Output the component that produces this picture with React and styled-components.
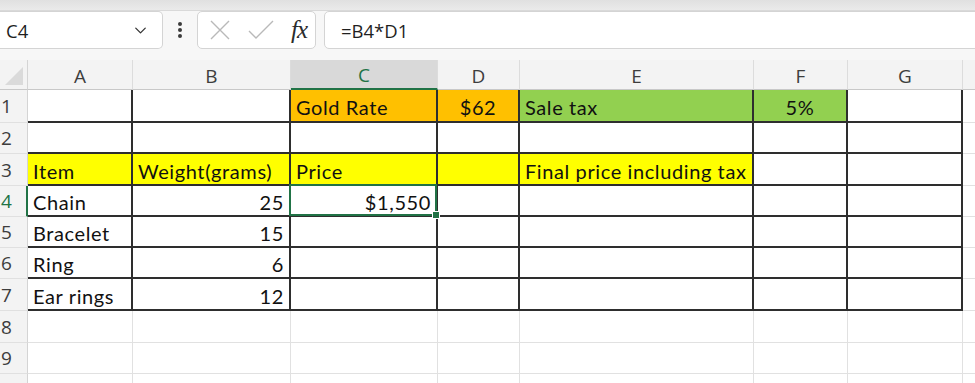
import React from "react";
import styled, { createGlobalStyle, css } from "styled-components";
import { ChevronDown } from "lucide-react";

const GlobalStyle = createGlobalStyle`
  html, body {
    margin: 0;
    padding: 0;
    background: #ffffff;
    overflow: hidden;
  }
  body {
    font-family: "Open Sans", "Noto Sans", sans-serif;
  }
`;

const GREEN = "#217346";
const DARK = "#2e2e2e";
const LIGHT = "#e1e1e1";

const COLS = ["A", "B", "C", "D", "E", "F", "G"];
const COL_WIDTHS = [28, 105, 158, 147, 82, 234, 94, 115, 20];
const ROW_HEIGHTS = [33, 31, 32, 31, 31, 31, 32, 32, 31, 31];

const YELLOW = "#ffff00";
const ORANGE = "#ffc000";
const LIME = "#92d050";

const data = {
  1: {
    C: { v: "Gold Rate", bg: ORANGE },
    D: { v: "$62", bg: ORANGE, align: "center" },
    E: { v: "Sale tax", bg: LIME },
    F: { v: "5%", bg: LIME, align: "center" },
  },
  3: {
    A: { v: "Item", bg: YELLOW },
    B: { v: "Weight(grams)", bg: YELLOW },
    C: { v: "Price", bg: YELLOW },
    D: { v: "", bg: YELLOW },
    E: { v: "Final price including tax", bg: YELLOW },
  },
  4: {
    A: { v: "Chain" },
    B: { v: "25", align: "right" },
    C: { v: "$1,550", align: "right", selected: true },
  },
  5: { A: { v: "Bracelet" }, B: { v: "15", align: "right" } },
  6: { A: { v: "Ring" }, B: { v: "6", align: "right" } },
  7: { A: { v: "Ear rings" }, B: { v: "12", align: "right" } },
};

const Window = styled.div`
  width: 975px;
  height: 383px;
  display: flex;
  flex-direction: column;
  background: #f3f3f3;
  overflow: hidden;
  & > * {
    flex-shrink: 0;
  }
`;

const TopStrip = styled.div`
  height: 10px;
  background: linear-gradient(#e0e0e0, #eaeaea);
  border-bottom: 1px solid #d9d9d9;
`;

const Toolbar = styled.div`
  height: 38px;
  display: flex;
  align-items: stretch;
  background: #f7f7f7;
  padding-bottom: 11px;
`;

const Box = styled.div`
  background: #ffffff;
  border: 1px solid #d4d4d4;
  border-radius: 5px;
  display: flex;
  align-items: center;
  box-sizing: border-box;
`;

const NameBox = styled(Box)`
  width: 163px;
  border-left: none;
  border-top-left-radius: 0;
  border-bottom-left-radius: 0;
  padding: 0 12px 0 6px;
  justify-content: space-between;
  font-size: 18.5px;
  color: #1f1f1f;
`;

const Grip = styled.div`
  width: 34px;
  display: flex;
  align-items: center;
  justify-content: center;
`;

const ActionBox = styled(Box)`
  width: 119px;
  padding: 0 8px 0 10px;
  justify-content: space-between;
`;

const Fx = styled.span`
  font-family: "Liberation Serif", "DejaVu Serif", serif;
  font-style: italic;
  font-size: 25px;
  color: #2b2b2b;
  letter-spacing: -1px;
  padding-bottom: 1px;
`;

const FormulaBox = styled(Box)`
  flex: 1;
  margin-left: 8px;
  margin-right: -8px;
  padding-left: 16px;
  font-size: 18.5px;
  color: #1f1f1f;
`;

const Sheet = styled.div`
  display: grid;
  grid-template-columns: ${COL_WIDTHS.map((w) => `${w}px`).join(" ")};
  grid-template-rows: 30px ${ROW_HEIGHTS.map((h) => `${h}px`).join(" ")};
  background: #ffffff;
`;

const Corner = styled.div`
  background: #f3f3f3;
  border-right: 1px solid #d4d4d4;
  border-bottom: 1px solid #c8c8c8;
  position: relative;
  box-sizing: border-box;
  &::after {
    content: "";
    position: absolute;
    right: 4px;
    bottom: 4px;
    width: 0;
    height: 0;
    border-left: 18px solid transparent;
    border-bottom: 18px solid #dadada;
  }
`;

const ColHead = styled.div`
  box-sizing: border-box;
  background: ${(p) => (p.$active ? "#d9d9d9" : "#f3f3f3")};
  color: ${(p) => (p.$active ? GREEN : "#3d3d3d")};
  border-right: 1px solid #dcdcdc;
  border-bottom: ${(p) => (p.$active ? `2px solid ${GREEN}` : "1px solid #c8c8c8")};
  display: flex;
  align-items: center;
  justify-content: center;
  font-size: 19px;
  padding-top: 2px;
`;

const RowHead = styled.div`
  box-sizing: border-box;
  background: #f3f3f3;
  color: ${(p) => (p.$active ? GREEN : "#3d3d3d")};
  border-right: ${(p) => (p.$active ? `2px solid ${GREEN}` : "1px solid #d4d4d4")};
  border-bottom: 1px solid #e0e0e0;
  display: flex;
  align-items: center;
  padding-left: 1px;
  font-size: 19px;
`;

const Cell = styled.div`
  box-sizing: border-box;
  position: relative;
  background: ${(p) => p.$bg || "#ffffff"};
  display: flex;
  align-items: center;
  justify-content: ${(p) =>
    p.$align === "right" ? "flex-end" : p.$align === "center" ? "center" : "flex-start"};
  padding: 3px 5px 0 5px;
  font-family: Lato, "Noto Sans", sans-serif;
  font-size: 20px;
  letter-spacing: 0.6px;
  color: #111111;
  white-space: nowrap;
  overflow: visible;
  ${(p) =>
    p.$boxed
      ? css`
          border-right: 2px solid ${DARK};
          border-bottom: 2px solid ${DARK};
        `
      : css`
          border-right: 1px solid ${LIGHT};
          border-bottom: 1px solid ${LIGHT};
        `}
  ${(p) =>
    p.$selected &&
    css`
      &::after {
        content: "";
        position: absolute;
        top: -2px;
        left: -2px;
        right: -1px;
        bottom: -1px;
        border: 2px solid ${GREEN};
        pointer-events: none;
      }
      &::before {
        content: "";
        position: absolute;
        right: -4px;
        bottom: -4px;
        width: 6px;
        height: 6px;
        background: ${GREEN};
        border: 1px solid #ffffff;
        z-index: 2;
      }
    `}
`;

const CrossIcon = () => (
  <svg width="24" height="24" viewBox="0 0 24 24">
    <path d="M3 3 L21 21 M21 3 L3 21" stroke="#b9b9b9" strokeWidth="1.4" fill="none" />
  </svg>
);

const CheckIcon = () => (
  <svg width="28" height="24" viewBox="0 0 28 24">
    <path d="M2 13 L9 20 L26 3" stroke="#b9b9b9" strokeWidth="1.4" fill="none" />
  </svg>
);

const DotsIcon = () => (
  <svg width="6" height="18" viewBox="0 0 6 18">
    <circle cx="3" cy="3" r="2" fill="#3b3b3b" />
    <circle cx="3" cy="9" r="2" fill="#3b3b3b" />
    <circle cx="3" cy="15" r="2" fill="#3b3b3b" />
  </svg>
);

export default function App() {
  const rows = ROW_HEIGHTS.map((_, i) => i + 1);
  return (
    <>
      <GlobalStyle />
      <Window>
        <TopStrip />
        <Toolbar>
          <NameBox>
            <span>C4</span>
            <ChevronDown size={19} strokeWidth={1.6} color="#333" />
          </NameBox>
          <Grip>
            <DotsIcon />
          </Grip>
          <ActionBox>
            <CrossIcon />
            <CheckIcon />
            <Fx>fx</Fx>
          </ActionBox>
          <FormulaBox>=B4*D1</FormulaBox>
        </Toolbar>
        <Sheet>
          <Corner />
          {COLS.map((c) => (
            <ColHead key={c} $active={c === "C"}>
              {c}
            </ColHead>
          ))}
          <ColHead />
          {rows.map((r) => (
            <React.Fragment key={r}>
              <RowHead $active={r === 4}>{r < 10 ? r : ""}</RowHead>
              {COLS.map((c) => {
                const cell = (data[r] && data[r][c]) || {};
                return (
                  <Cell
                    key={c}
                    $bg={cell.bg}
                    $align={cell.align}
                    $boxed={r <= 7}
                    $selected={cell.selected}
                  >
                    {cell.v}
                  </Cell>
                );
              })}
              <Cell />
            </React.Fragment>
          ))}
        </Sheet>
      </Window>
    </>
  );
}
